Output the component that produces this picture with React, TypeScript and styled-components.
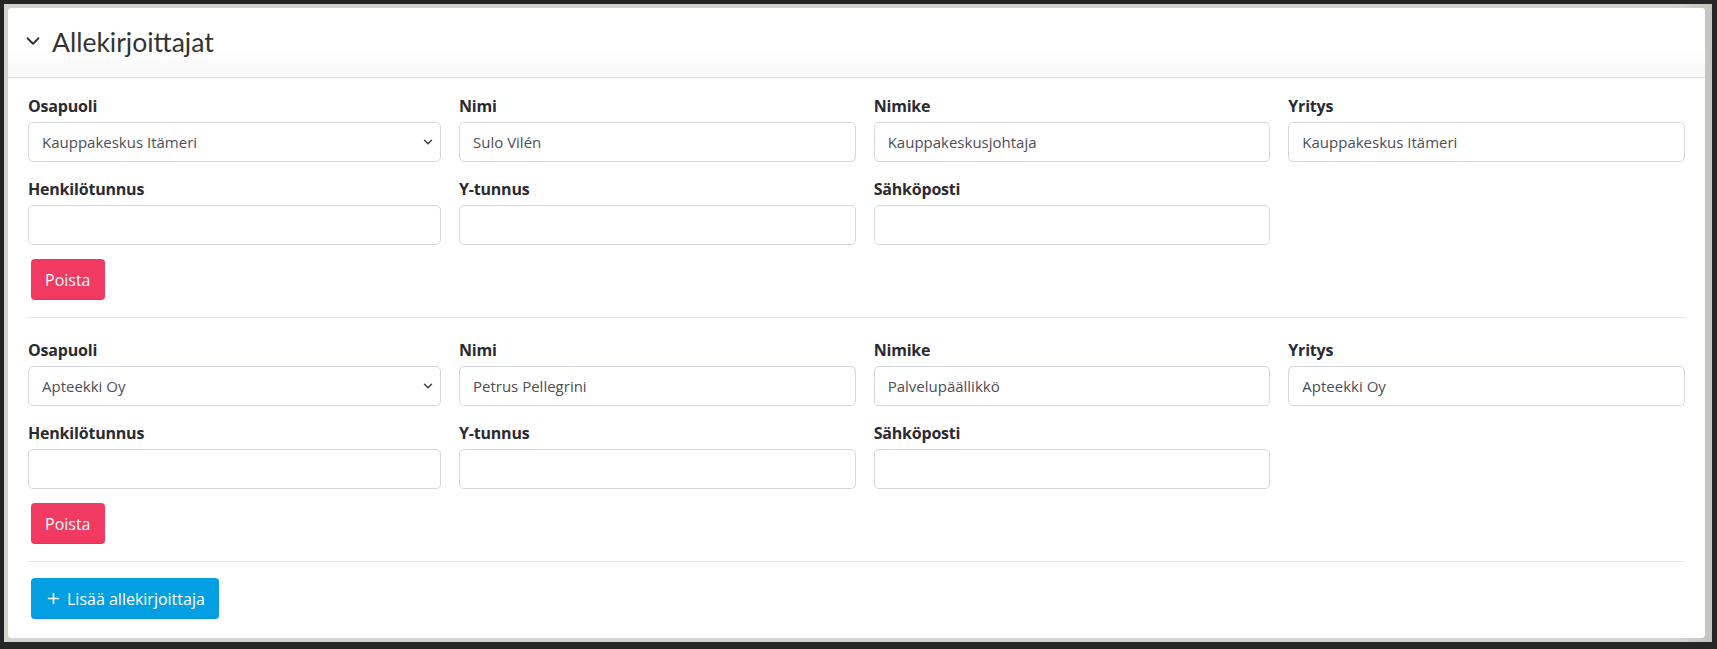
import styled, { createGlobalStyle } from 'styled-components';
import { ChevronDown, Plus } from 'lucide-react';

const GlobalStyle = createGlobalStyle`
  html, body {
    margin: 0;
    background: #262626;
  }
  * {
    box-sizing: border-box;
  }
  body {
    font-family: 'Open Sans', 'Lato', sans-serif;
    color: #2a2a33;
  }
`;

const Frame = styled.div`
  margin: 4px 5px 6px 4px;
  padding: 4px 7px 4px 4px;
  background: linear-gradient(to right, #d4d4ce 98%, #c4c4be);
`;

const Card = styled.section`
  background: #fff;
  border-radius: 4px;
  overflow: hidden;
`;

const Header = styled.header`
  height: 70px;
  display: flex;
  align-items: center;
  gap: 8px;
  padding: 0 14px;
  background: linear-gradient(to bottom, #fff 55%, #f8f8f8);
  border-bottom: 1px solid #dedede;
  color: #333;

  svg {
    margin-bottom: 3px;
  }

  h2 {
    margin: 0 0 2px;
    font-family: 'Lato', sans-serif;
    font-size: 26.5px;
    font-weight: 400;
  }
`;

const Body = styled.div`
  padding: 0 20px;
`;

const Signer = styled.div`
  padding: 22px 0 17px;
  border-bottom: 1px solid #e5e5e5;

  &:first-child {
    padding-top: 18px;
  }
`;

const FieldGrid = styled.div`
  display: grid;
  grid-template-columns: 413px repeat(3, 1fr);
  column-gap: 18px;
  row-gap: 17px;
`;

const Field = styled.label`
  display: flex;
  flex-direction: column;
  gap: 6px;

  span {
    font-size: 16px;
    line-height: 20px;
    font-weight: 700;
    letter-spacing: -0.2px;
    color: #2a2a33;
  }
`;

const Input = styled.input`
  height: 40px;
  width: 100%;
  padding: 0 13px;
  border: 1px solid #d3d7dd;
  border-radius: 5px;
  font-family: inherit;
  font-size: 15px;
  color: #4d4d55;
  background: #fff;
  outline: none;
`;

const SelectWrap = styled.div`
  position: relative;

  svg {
    position: absolute;
    right: 6px;
    top: 13px;
    color: #444;
    pointer-events: none;
  }
`;

const Select = styled.select`
  appearance: none;
  height: 40px;
  width: 100%;
  padding: 0 30px 0 13px;
  border: 1px solid #d3d7dd;
  border-radius: 5px;
  font-family: inherit;
  font-size: 15px;
  color: #4d4d55;
  background: #fff;
  outline: none;
`;

const Button = styled.button<{ $tone: 'danger' | 'primary' }>`
  display: inline-flex;
  align-items: center;
  gap: 5px;
  height: 41px;
  margin-left: 3px;
  padding: 0 14px;
  border: none;
  border-radius: 4px;
  font-family: inherit;
  font-size: 16px;
  color: #fff;
  background: ${({ $tone }) => ($tone === 'danger' ? '#f03a61' : '#049fe2')};
  box-shadow: inset 0 -1px 0 rgba(0, 0, 0, 0.08);
  cursor: pointer;
`;

const RemoveRow = styled.div`
  margin-top: 14px;
`;

const Footer = styled.div`
  padding: 16px 0 19px;
`;

type SignerData = {
  party: string;
  name: string;
  title: string;
  company: string;
};

const parties = ['Kauppakeskus Itämeri', 'Apteekki Oy'];

const signers: SignerData[] = [
  { party: 'Kauppakeskus Itämeri', name: 'Sulo Vilén', title: 'Kauppakeskusjohtaja', company: 'Kauppakeskus Itämeri' },
  { party: 'Apteekki Oy', name: 'Petrus Pellegrini', title: 'Palvelupäällikkö', company: 'Apteekki Oy' },
];

const SignerForm = ({ signer }: { signer: SignerData }) => (
  <Signer>
    <FieldGrid>
      <Field>
        <span>Osapuoli</span>
        <SelectWrap>
          <Select defaultValue={signer.party}>
            {parties.map((p) => (
              <option key={p} value={p}>
                {p}
              </option>
            ))}
          </Select>
          <ChevronDown size={14} strokeWidth={2.6} />
        </SelectWrap>
      </Field>
      <Field>
        <span>Nimi</span>
        <Input defaultValue={signer.name} />
      </Field>
      <Field>
        <span>Nimike</span>
        <Input defaultValue={signer.title} />
      </Field>
      <Field>
        <span>Yritys</span>
        <Input defaultValue={signer.company} />
      </Field>
      <Field>
        <span>Henkilötunnus</span>
        <Input />
      </Field>
      <Field>
        <span>Y-tunnus</span>
        <Input />
      </Field>
      <Field>
        <span>Sähköposti</span>
        <Input />
      </Field>
    </FieldGrid>
    <RemoveRow>
      <Button $tone="danger">Poista</Button>
    </RemoveRow>
  </Signer>
);

const App = () => (
  <>
    <GlobalStyle />
    <Frame>
      <Card>
        <Header>
          <ChevronDown size={22} strokeWidth={2} />
          <h2>Allekirjoittajat</h2>
        </Header>
        <Body>
          {signers.map((s) => (
            <SignerForm key={s.name} signer={s} />
          ))}
          <Footer>
            <Button $tone="primary">
              <Plus size={17} strokeWidth={2.2} />
              Lisää allekirjoittaja
            </Button>
          </Footer>
        </Body>
      </Card>
    </Frame>
  </>
);

export default App;
